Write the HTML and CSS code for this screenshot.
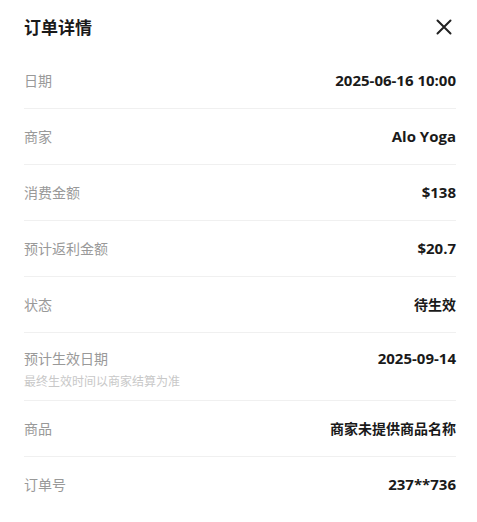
FILE: index.html
```html
<!DOCTYPE html>
<html lang="zh-CN">
<head>
<meta charset="utf-8">
<link rel="stylesheet" href="styles.css">
</head>
<body>
<div class="sheet">
  <div class="header">
    <div class="title">订单详情</div>
    <button class="close" aria-label="关闭">
      <svg width="16" height="16" viewBox="0 0 16 16"><path d="M1.5 1.5 L14.5 14.5 M14.5 1.5 L1.5 14.5" stroke="#222" stroke-width="2" stroke-linecap="round" fill="none"/></svg>
    </button>
  </div>
  <div class="row"><div class="label">日期</div><div class="value">2025-06-16 10:00</div></div>
  <div class="row"><div class="label">商家</div><div class="value">Alo Yoga</div></div>
  <div class="row"><div class="label">消费金额</div><div class="value">$138</div></div>
  <div class="row"><div class="label">预计返利金额</div><div class="value">$20.7</div></div>
  <div class="row"><div class="label">状态</div><div class="value cjk">待生效</div></div>
  <div class="row row-sub">
    <div class="label-group">
      <div class="label">预计生效日期</div>
      <div class="sublabel">最终生效时间以商家结算为准</div>
    </div>
    <div class="value">2025-09-14</div>
  </div>
  <div class="row"><div class="label">商品</div><div class="value cjk">商家未提供商品名称</div></div>
  <div class="row last"><div class="label">订单号</div><div class="value">237**736</div></div>
</div>
</body>
</html>
```
FILE: styles.css
```css
html, body {
  margin: 0;
  padding: 0;
  background: #ffffff;
}
body {
  font-family: "Open Sans", "Noto Sans CJK SC", sans-serif;
  color: #1a1a1a;
}
.sheet {
  padding: 0 21px 0 24px;
}
.header {
  height: 53px;
  display: flex;
  align-items: center;
  justify-content: space-between;
}
.title {
  font-family: "Noto Sans CJK SC", sans-serif;
  font-size: 17px;
  font-weight: 700;
  color: #1a1a1a;
  line-height: 24px;
  margin-top: 1px;
}
.close {
  border: none;
  background: none;
  padding: 0;
  width: 16px;
  height: 16px;
  margin-right: 4px;
  display: flex;
}
.row {
  display: flex;
  justify-content: space-between;
  align-items: baseline;
  padding: 16px 0;
  border-bottom: 1px solid #f0f0f0;
  line-height: 23px;
}
.row.last {
  border-bottom: none;
}
.row-sub {
  padding: 14px 0 11px;
}
.row-sub .label {
  line-height: 22px;
}
.label-group {
  display: flex;
  flex-direction: column;
}
.label {
  font-family: "Noto Sans CJK SC", sans-serif;
  font-size: 14px;
  color: #999999;
}
.sublabel {
  font-family: "Noto Sans CJK SC", sans-serif;
  font-size: 12px;
  line-height: 16px;
  margin-top: 4px;
  color: #c8c8c8;
}
.value {
  font-family: "Open Sans", "Noto Sans CJK SC", sans-serif;
  font-size: 15px;
  font-weight: 700;
  color: #1a1a1a;
}
.value.cjk {
  font-family: "Noto Sans CJK SC", sans-serif;
  font-size: 14px;
}
```
